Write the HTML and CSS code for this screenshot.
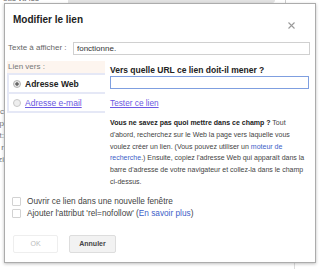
FILE: index.html
```html
<!DOCTYPE html>
<html lang="fr">
<head>
    <meta charset="UTF-8">
    <title>Modifier le lien</title>
    <link rel="stylesheet" href="styles.css">
</head>
<body>
    <!-- Page behind the dialog -->
    <div class="page">
        <div class="page-text">ous vu les</div>
        <div class="page-bar"></div>
        <div class="page-line"></div>
        <div class="page-side">
            <span>ic</span><span>p</span><span>t:</span><span>r</span><span>zi</span>
        </div>
        <div class="page-foot"></div>
    </div>

    <!-- Link dialog -->
    <div class="dialog">
        <div class="dialog-head">
            <span class="dialog-title">Modifier le lien</span>
            <svg class="close" width="7" height="7" viewBox="0 0 7 7">
                <path d="M0.5 0.5L6.5 6.5M6.5 0.5L0.5 6.5" stroke="#9a9a9a" stroke-width="1.1" fill="none"/>
            </svg>
        </div>

        <div class="text-row">
            <label class="text-label">Texte à afficher :</label>
            <input class="field text-field" type="text" value="fonctionne.">
        </div>

        <div class="link-body">
            <div class="link-types">
                <div class="types-label">Lien vers :</div>
                <label class="type-tab">
                    <span class="radio radio-on"></span>
                    <strong>Adresse Web</strong>
                </label>
                <label class="type-tab">
                    <span class="radio"></span>
                    <a href="#" class="tab-link">Adresse e-mail</a>
                </label>
            </div>

            <div class="link-pane">
                <div class="pane-title">Vers quelle URL ce lien doit-il mener ?</div>
                <input class="field url-field" type="text">
                <a href="#" class="test-link">Tester ce lien</a>
                <p class="help">
                    <b>Vous ne savez pas quoi mettre dans ce champ ?</b> Tout d'abord, recherchez sur le Web la page vers laquelle vous voulez créer un lien. (Vous pouvez utiliser un <a href="#">moteur de recherche</a>.) Ensuite, copiez l'adresse Web qui apparaît dans la barre d'adresse de votre navigateur et collez-la dans le champ ci-dessus.
                </p>
            </div>
        </div>

        <div class="options">
            <label class="option">
                <span class="checkbox"></span>
                <span>Ouvrir ce lien dans une nouvelle fenêtre</span>
            </label>
            <label class="option">
                <span class="checkbox"></span>
                <span>Ajouter l'attribut 'rel=nofollow' (<a href="#">En savoir plus</a>)</span>
            </label>
        </div>

        <div class="buttons">
            <button class="btn btn-ok">OK</button>
            <button class="btn btn-cancel">Annuler</button>
        </div>
    </div>
</body>
</html>
```

FILE: styles.css
```css
/* Page behind the dialog */
body {
    margin: 0;
    width: 320px;
    height: 269px;
    overflow: hidden;
    background: #fff;
    font-family: "Liberation Sans", Arial, sans-serif;
    position: relative;
}

.page-text {
    position: absolute;
    left: 3px;
    top: -6px;
    font-size: 8px;
    color: #666;
}

.page-bar {
    position: absolute;
    left: 68px;
    top: 0;
    width: 207px;
    height: 3px;
    background: #e2e2e2;
    border-bottom-right-radius: 3px;
}

.page-line {
    position: absolute;
    left: 285px;
    top: 0;
    width: 1px;
    height: 3px;
    background: #ccc;
}

.page-side {
    position: absolute;
    left: -6px;
    top: 106px;
    display: flex;
    flex-direction: column;
    align-items: flex-end;
    width: 10px;
    font-size: 8px;
    line-height: 12px;
    color: #777;
}

.page-foot {
    position: absolute;
    left: 294px;
    top: 263px;
    width: 1px;
    height: 6px;
    background: #ddd;
}

/* Dialog box */
.dialog {
    position: absolute;
    left: 4px;
    top: 3px;
    width: 312px;
    height: 260px;
    box-sizing: border-box;
    background: #fff;
    border: 1px solid #acacac;
    box-shadow: 0 1px 3px rgba(0,0,0,0.25);
}

.dialog-head {
    height: 38px;
    display: flex;
    justify-content: space-between;
    align-items: flex-start;
}

.dialog-title {
    margin: 10px 0 0 8px;
    font-size: 10px;
    line-height: 11px;
    font-weight: bold;
    color: #222;
}

.close {
    margin: 18px 20px 0 0;
}

/* Text to display row */
.text-row {
    display: flex;
    align-items: center;
    height: 13px;
    padding: 0 5px 0 3px;
}

.text-label {
    width: 65px;
    font-size: 8px;
    color: #666;
    margin-top: -2px;
}

.field {
    box-sizing: border-box;
    height: 13px;
    margin: 0;
    padding: 0 3px;
    border: 1px solid #d0d0d0;
    font-family: inherit;
    font-size: 8px;
    color: #333;
    outline: none;
}

.text-field {
    flex: 1;
}

/* Link target section */
.link-body {
    display: flex;
    margin-top: 6px;
    padding-left: 2px;
}

.link-types {
    width: 98px;
}

.types-label {
    height: 12px;
    line-height: 12px;
    padding-left: 1px;
    background: #fdf5ef;
    font-size: 8px;
    color: #777;
}

.type-tab {
    display: flex;
    align-items: center;
    gap: 4px;
    height: 17px;
    padding-left: 4px;
    border: 2px solid #e5e8f6;
    border-right: none;
    font-size: 8.5px;
    color: #222;
}

.type-tab + .type-tab {
    border-top: none;
}

.radio {
    width: 6px;
    height: 6px;
    border-radius: 50%;
    border: 1px solid #c8c8c8;
    background: #eee;
}

.radio-on {
    background: radial-gradient(circle, #666 0 1.4px, #e6e6e6 2px);
    border-color: #b4b4b4;
}

.tab-link,
.test-link {
    color: #6b58e2;
}

.link-pane {
    width: 199px;
    margin-left: 5px;
}

.pane-title {
    margin-top: 3px;
    font-size: 8.5px;
    line-height: 12px;
    font-weight: bold;
    color: #222;
}

.url-field {
    display: block;
    width: 100%;
    border-color: #7f9fe0;
}

.test-link {
    display: block;
    margin-top: 9px;
    font-size: 8.25px;
    line-height: 12px;
}

.help {
    margin: 7px 0 0;
    font-size: 7px;
    line-height: 11.8px;
    color: #444;
}

.help b {
    color: #222;
}

.help a,
.option a {
    color: #3c5ec8;
    text-decoration: none;
}

/* Checkbox options */
.options {
    margin-top: 8px;
    padding-left: 7px;
}

.option {
    display: flex;
    align-items: center;
    gap: 6px;
    height: 12px;
    font-size: 8.25px;
    color: #444;
}

.checkbox {
    width: 7px;
    height: 7px;
    border: 1px solid #d2d2d2;
    border-radius: 1px;
    background: #fff;
}

/* Footer buttons */
.buttons {
    display: flex;
    gap: 11px;
    margin-top: 15px;
    padding-left: 8px;
}

.btn {
    height: 18px;
    box-sizing: border-box;
    padding: 0;
    border-radius: 2px;
    font-family: inherit;
    font-size: 7px;
}

.btn-ok {
    width: 45px;
    background: #fff;
    border: 1px solid #eee;
    color: #bbb;
}

.btn-cancel {
    width: 47px;
    background: #f2f2f2;
    border: 1px solid #ddd;
    color: #444;
    font-weight: bold;
}
```
